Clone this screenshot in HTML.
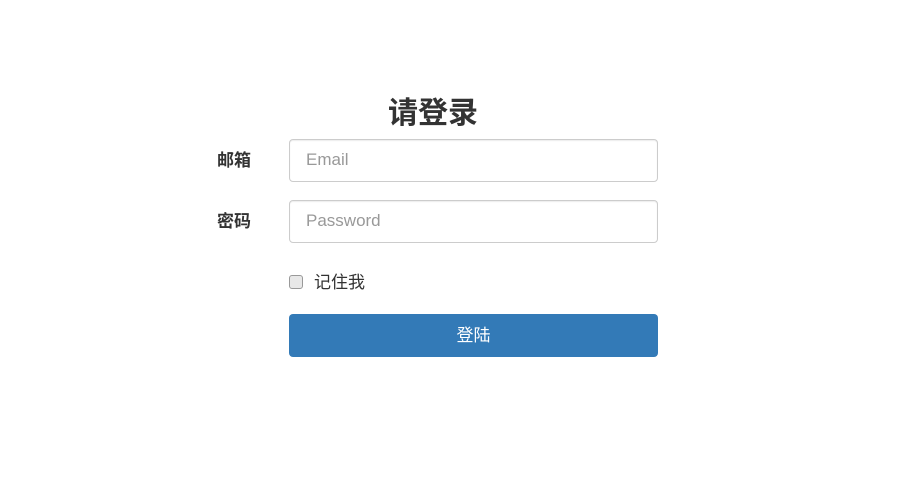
<!DOCTYPE html>
<html><head><meta charset="utf-8"><style>
body{margin:0;width:900px;height:497px;background:#fff;font-family:"Liberation Sans","Noto Sans CJK SC",sans-serif;color:#333;position:relative}
.a{position:absolute}
h1{position:absolute;left:333px;width:200px;text-align:center;top:94px;margin:0;font-size:30px;font-weight:bold;line-height:40px}
.lab{font-weight:bold;font-size:17px;line-height:20px;left:217px}
.in{left:289px;width:367px;height:41px;border:1px solid #ccc;border-radius:4px;box-shadow:inset 0 1px 1px rgba(0,0,0,.075);box-sizing:content-box}
.in span{position:absolute;left:16px;top:10px;font-size:17px;color:#999;line-height:20px}
.cb{left:289px;top:275px;width:12px;height:12px;border:1px solid #999;border-radius:3px;background:#e8e8e8}
.btn{left:289px;top:314px;width:369px;height:43px;background:#337ab7;border-radius:4px;color:#fff;font-size:17px;text-align:center;line-height:43px}
</style></head><body>
<h1>请登录</h1>
<div class="a lab" style="top:151px">邮箱</div>
<div class="a in" style="top:139px"><span>Email</span></div>
<div class="a lab" style="top:212px">密码</div>
<div class="a in" style="top:200px"><span>Password</span></div>
<div class="a cb"></div>
<div class="a" style="left:314px;top:273px;font-size:17px;line-height:20px">记住我</div>
<div class="a btn">登陆</div>
</body></html>
